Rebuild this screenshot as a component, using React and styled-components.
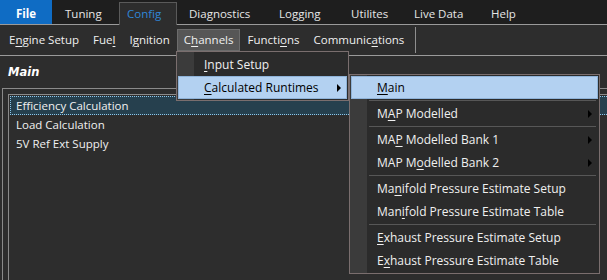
import React from 'react';
import styled, { createGlobalStyle } from 'styled-components';

const Global = createGlobalStyle`
  html, body { margin: 0; padding: 0; background: #2d2d2d; }
  body { font-family: "Open Sans", "Noto Sans", sans-serif; }
  * { box-sizing: border-box; }
`;

const Screen = styled.div`
  position: relative;
  width: 607px;
  height: 280px;
  overflow: hidden;
  background: #2d2d2d;
  color: #f0f0f0;
  font-family: "Open Sans", "Noto Sans", sans-serif;
  font-size: 11.5px;
`;

const TabBar = styled.div`
  display: flex;
  align-items: flex-end;
  height: 25px;
  background: #1e1e1e;
  border-bottom: 1px solid #9a9a9a;
`;

const Tab = styled.div`
  width: ${(p) => p.$w}px;
  padding-left: ${(p) => p.$pl}px;
  height: ${(p) => (p.$active ? 23 : 24)}px;
  line-height: ${(p) => (p.$active ? 22 : 25)}px;
  margin-bottom: ${(p) => (p.$active ? -1 : 0)}px;
  white-space: nowrap;
  color: ${(p) => (p.$active ? '#2f86d8' : '#e6e6e6')};
  background: ${(p) => (p.$primary ? '#0f6cc4' : p.$active ? '#2d2d2d' : 'transparent')};
  border: 1px solid ${(p) => (p.$active ? '#5a5a5a' : 'transparent')};
  border-bottom: none;
  font-weight: ${(p) => (p.$primary ? 700 : 400)};
  text-align: ${(p) => (p.$primary ? 'center' : 'left')};
  color: ${(p) => (p.$primary ? '#ffffff' : p.$active ? '#2f86d8' : '#e6e6e6')};
`;

const Toolbar = styled.div`
  display: flex;
  align-items: center;
  height: 31px;
  padding-left: 2px;
  border-bottom: 1px solid #9a9a9a;
`;

const ToolItem = styled.div`
  height: 22px;
  line-height: 20px;
  padding: 0 6px;
  white-space: nowrap;
  border: 1px solid ${(p) => (p.$active ? '#6c6c6c' : 'transparent')};
  background: ${(p) => (p.$active ? '#565656' : 'transparent')};
`;

const ToolSep = styled.div`
  width: 1px;
  height: 26px;
  margin-left: 4px;
  background: #8e8e8e;
`;

const Key = styled.span`
  text-decoration: underline;
  text-underline-offset: 2px;
  text-decoration-thickness: 1px;
`;

const Title = styled.div`
  padding: 8px 8px 0;
  height: 24px;
  line-height: 16px;
  font-family: "DejaVu Sans", Verdana, sans-serif;
  font-weight: 700;
  font-style: italic;
  font-size: 11.5px;
  color: #ffffff;
`;

const GroupBox = styled.div`
  margin: 8px -40px 0 2px;
  padding: 5px;
  height: 200px;
  border: 1px solid #8a8a8a;
`;

const ListBox = styled.div`
  height: 100%;
  padding: 1px;
  border: 1px solid #8a8a8a;
`;

const Row = styled.div`
  height: 19px;
  line-height: 17px;
  padding-left: 5px;
  border: 1px ${(p) => (p.$selected ? 'dotted #8cc6ea' : 'solid transparent')};
  background: ${(p) => (p.$selected ? '#26404e' : 'transparent')};
  white-space: nowrap;
`;

const Menu = styled.div`
  position: absolute;
  left: ${(p) => p.$x}px;
  top: ${(p) => p.$y}px;
  width: ${(p) => p.$w}px;
  padding: 1px 0;
  border: 1px solid #7a6e6e;
  background: linear-gradient(to right, #3b3b3b 0 17px, #2b2b2b 17px);
  font-size: 12px;
  z-index: 2;
`;

const MenuItem = styled.div`
  display: flex;
  align-items: center;
  height: 23px;
  margin: 0 1px;
  padding: 0 5px 0 25px;
  white-space: nowrap;
  border: 1px solid ${(p) => (p.$active ? '#8fb3d9' : 'transparent')};
  background: ${(p) => (p.$active ? '#b3d1f1' : 'transparent')};
  color: ${(p) => (p.$active ? '#000000' : '#f0f0f0')};
`;

const MenuLabel = styled.span`
  flex: 1;
`;

const Arrow = styled.span`
  width: 0;
  height: 0;
  border-left: 4px solid #000000;
  border-top: 4px solid transparent;
  border-bottom: 4px solid transparent;
`;

const MenuSep = styled.div`
  height: 1px;
  margin: 1px 3px 1px 19px;
  background: #575757;
`;

function Mnemonic({ text }) {
  const i = text.indexOf('&');
  if (i < 0) return <>{text}</>;
  return (
    <>
      {text.slice(0, i)}
      <Key>{text[i + 1]}</Key>
      {text.slice(i + 2)}
    </>
  );
}

const tabs = [
  { label: 'File', w: 52, pl: 0, primary: true },
  { label: 'Tuning', w: 67, pl: 12 },
  { label: 'Config', w: 58, pl: 7, active: true },
  { label: 'Diagnostics', w: 90, pl: 11 },
  { label: 'Logging', w: 72, pl: 11 },
  { label: 'Utilites', w: 63, pl: 11 },
  { label: 'Live Data', w: 77, pl: 11 },
  { label: 'Help', w: 61, pl: 11 },
];

const tools = ['E&ngine Setup', 'Fue&l', 'I&gnition', 'C&hannels', 'Functi&ons', 'Communic&ations'];

const channelsMenu = [
  { label: '&Input Setup' },
  { label: '&Calculated Runtimes', active: true, arrow: true },
];

const runtimesMenu = [
  { label: '&Main', active: true },
  { sep: true },
  { label: 'M&AP Modelled', arrow: true },
  { sep: true },
  { label: 'MA&P Modelled Bank 1', arrow: true },
  { label: 'MAP M&odelled Bank 2', arrow: true },
  { sep: true },
  { label: 'Ma&nifold Pressure Estimate Setup' },
  { label: 'Man&ifold Pressure Estimate Table' },
  { sep: true },
  { label: '&Exhaust Pressure Estimate Setup' },
  { label: 'E&xhaust Pressure Estimate Table' },
];

function DropMenu({ x, y, w, items }) {
  return (
    <Menu $x={x} $y={y} $w={w}>
      {items.map((it, i) =>
        it.sep ? (
          <MenuSep key={i} />
        ) : (
          <MenuItem key={i} $active={it.active}>
            <MenuLabel>
              <Mnemonic text={it.label} />
            </MenuLabel>
            {it.arrow && <Arrow />}
          </MenuItem>
        )
      )}
    </Menu>
  );
}

export default function App() {
  return (
    <Screen>
      <Global />
      <TabBar>
        {tabs.map((t) => (
          <Tab key={t.label} $w={t.w} $pl={t.pl} $primary={t.primary} $active={t.active}>
            {t.label}
          </Tab>
        ))}
      </TabBar>
      <Toolbar>
        {tools.map((t) => (
          <ToolItem key={t} $active={t === 'C&hannels'}>
            <Mnemonic text={t} />
          </ToolItem>
        ))}
        <ToolSep />
      </Toolbar>
      <Title>Main</Title>
      <GroupBox>
        <ListBox>
          <Row $selected>Efficiency Calculation</Row>
          <Row>Load Calculation</Row>
          <Row>5V Ref Ext Supply</Row>
        </ListBox>
      </GroupBox>
      <DropMenu x={176} y={51} w={173} items={channelsMenu} />
      <DropMenu x={349} y={74} w={251} items={runtimesMenu} />
    </Screen>
  );
}
